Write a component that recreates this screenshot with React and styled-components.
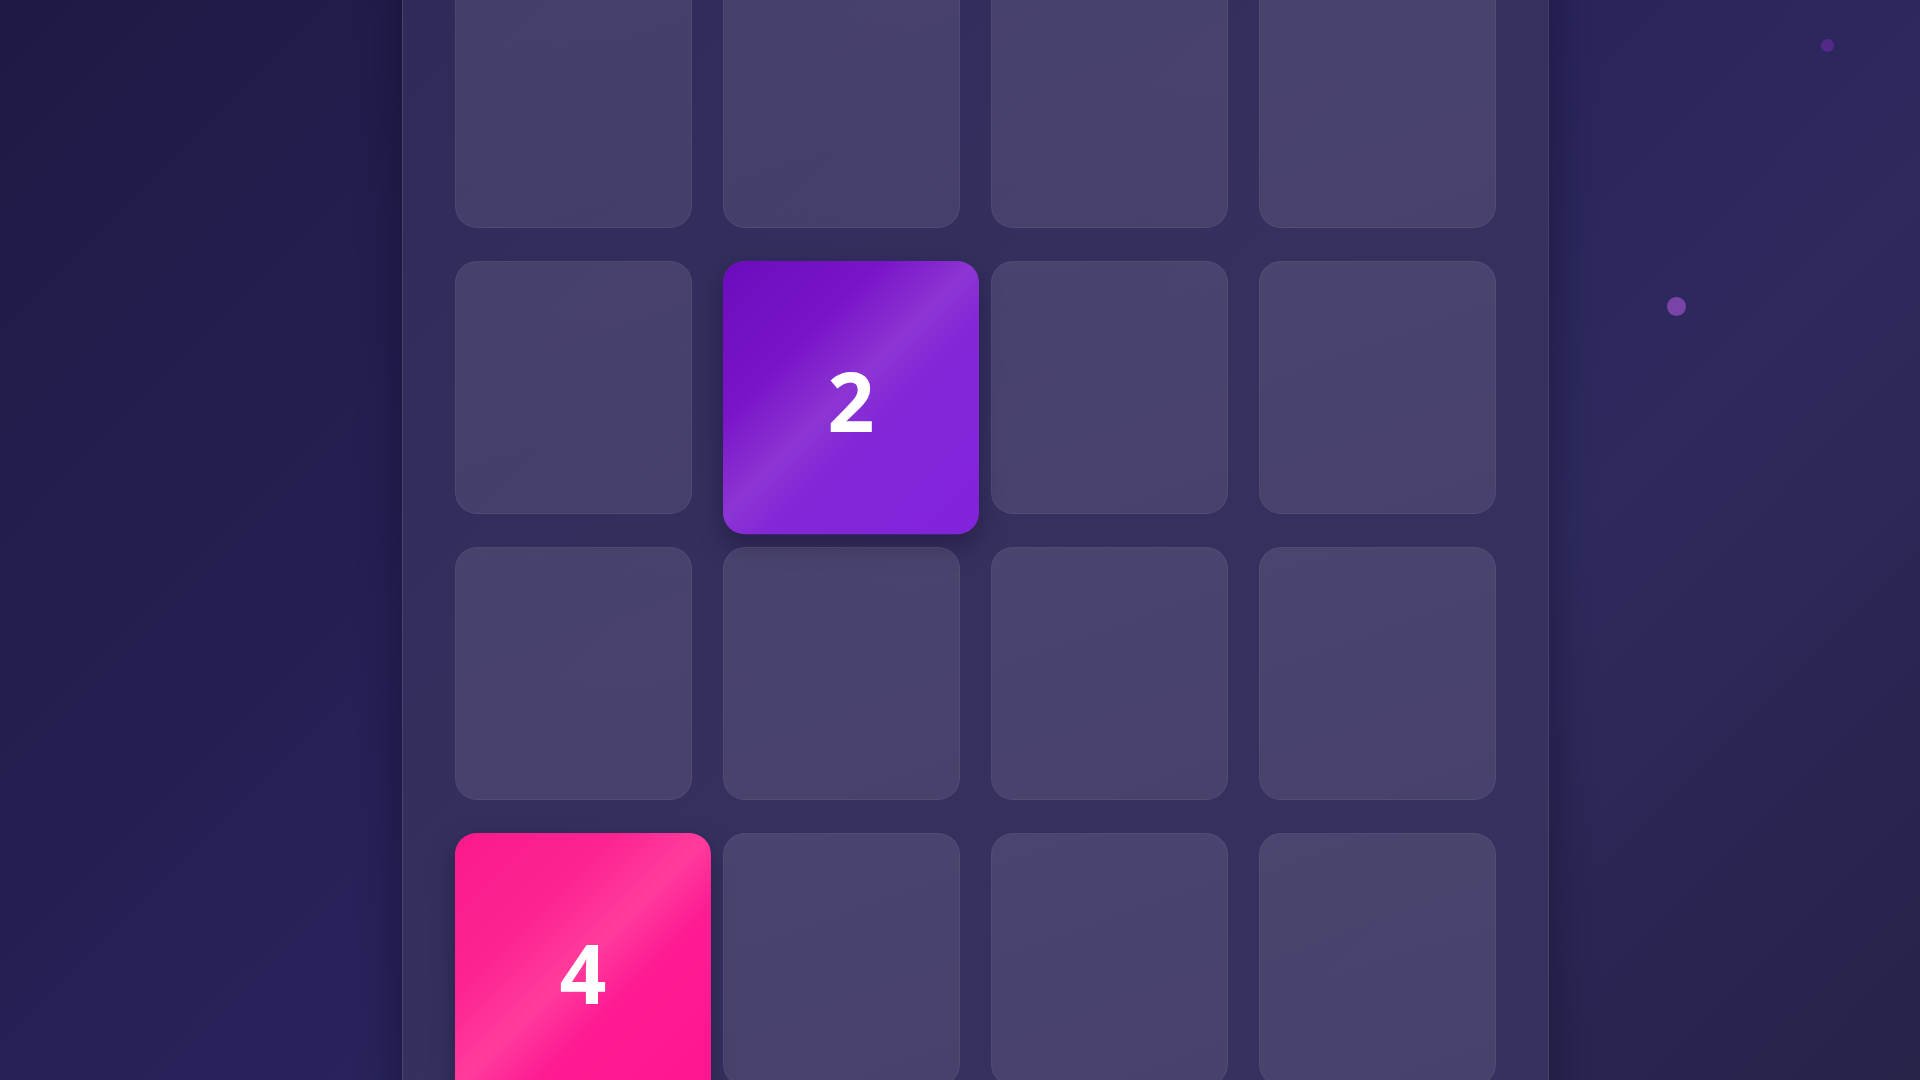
import React from "react";
import styled, { createGlobalStyle } from "styled-components";

const GlobalStyle = createGlobalStyle`
  html, body {
    margin: 0;
    padding: 0;
    height: 100%;
    overflow: hidden;
  }
  body {
    font-family: "Open Sans", "Noto Sans", "DejaVu Sans", sans-serif;
    background: linear-gradient(135deg, #1f1a44 0%, #27225a 45%, #2e2a5e 70%, #262248 100%);
  }
`;

const Stage = styled.main`
  position: relative;
  height: 100vh;
  display: flex;
  align-items: center;
  justify-content: center;
  padding: 0 0 20px 30px;
  box-sizing: border-box;
  overflow: hidden;
`;

const Particle = styled.span`
  position: absolute;
  border-radius: 50%;
  background: ${(p) => p.color};
  width: ${(p) => p.size}px;
  height: ${(p) => p.size}px;
  left: ${(p) => p.x}px;
  top: ${(p) => p.y}px;
  filter: blur(0.6px);
`;

const Board = styled.section`
  flex-shrink: 0;
  padding: 52px;
  background: linear-gradient(135deg, #2f2a5a 0%, #36305f 50%, #36315e 100%);
  border: 1px solid rgba(255, 255, 255, 0.1);
  border-radius: 24px;
  box-shadow: 0 0 40px rgba(10, 6, 30, 0.45);
`;

const Grid = styled.div`
  display: grid;
  grid-template-columns: repeat(4, 237px);
  grid-auto-rows: 253px;
  gap: 33px 31px;
`;

const Cell = styled.div`
  position: relative;
  border-radius: 22px;
  background: linear-gradient(160deg, rgba(255, 255, 255, 0.1), rgba(255, 255, 255, 0.085));
  border: 1px solid rgba(255, 255, 255, 0.05);
  box-sizing: border-box;
`;

const tileColors = {
  2: "linear-gradient(135deg, #6c0cbd 0%, #7a14c8 30%, #8c35d3 48%, #8326d8 60%, #8223db 100%)",
  4: "linear-gradient(135deg, #fb1a8c 0%, #fd2391 30%, #ff3c9c 48%, #ff1c93 62%, #ff1490 100%)",
};

const Tile = styled.div`
  position: absolute;
  inset: -1px;
  transform: scale(1.08);
  transform-origin: top left;
  border-radius: 20px;
  background: ${(p) => tileColors[p.value]};
  box-shadow: 0 10px 22px rgba(12, 6, 35, 0.35);
  display: flex;
  align-items: center;
  justify-content: center;
  padding-top: 4px;
  box-sizing: border-box;
  color: #ffffff;
  font-family: "Open Sans", "Noto Sans", sans-serif;
  font-weight: 700;
  font-size: 76px;
  line-height: 1;
`;

const cells = [
  0, 0, 0, 0,
  0, 2, 0, 0,
  0, 0, 0, 0,
  4, 0, 0, 0,
];

export default function App() {
  return (
    <>
      <GlobalStyle />
      <Stage>
        <Particle color="#55298c" size={13} x={1821} y={39} />
        <Particle color="#7a43a8" size={19} x={1667} y={297} />
        <Board>
          <Grid>
            {cells.map((v, i) => (
              <Cell key={i}>{v ? <Tile value={v}>{v}</Tile> : null}</Cell>
            ))}
          </Grid>
        </Board>
      </Stage>
    </>
  );
}
